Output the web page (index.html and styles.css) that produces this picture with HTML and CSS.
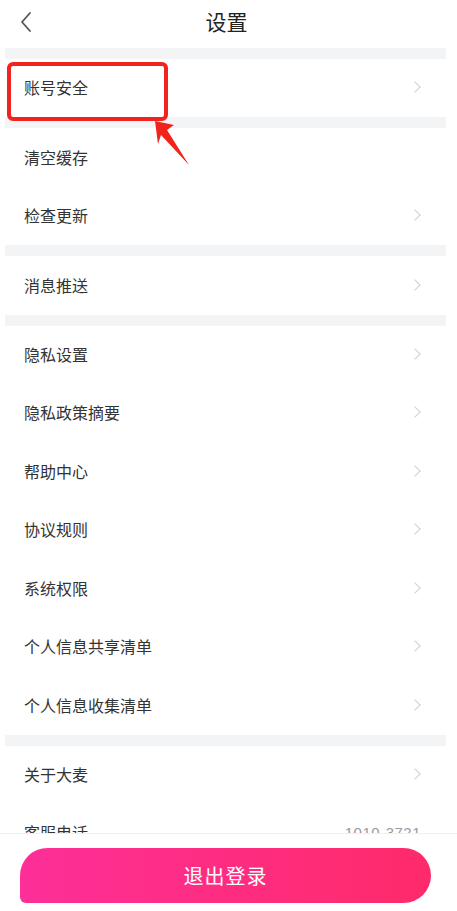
FILE: index.html
```html
<!DOCTYPE html>
<html lang="zh">
<head>
    <meta charset="utf-8">
    <title>设置</title>
    <link rel="stylesheet" href="styles.css">
</head>
<body>
    <div class="page">
        <div class="header">
            <a class="back" href="#">
                <svg width="12" height="20" viewBox="0 0 12 20"><polyline points="9,1 1,10 9,19" fill="none" stroke="#555" stroke-width="1.8" stroke-linecap="round" stroke-linejoin="round"/></svg>
            </a>
            <h1>设置</h1>
            <span></span>
        </div>

        <div class="list">
            <div class="gap"></div>
            <div class="row"><span>账号安全</span><i class="arrow"></i></div>
            <div class="gap"></div>
            <div class="row"><span>清空缓存</span></div>
            <div class="row"><span>检查更新</span><i class="arrow"></i></div>
            <div class="gap"></div>
            <div class="row"><span>消息推送</span><i class="arrow"></i></div>
            <div class="gap"></div>
            <div class="row"><span>隐私设置</span><i class="arrow"></i></div>
            <div class="row"><span>隐私政策摘要</span><i class="arrow"></i></div>
            <div class="row"><span>帮助中心</span><i class="arrow"></i></div>
            <div class="row"><span>协议规则</span><i class="arrow"></i></div>
            <div class="row"><span>系统权限</span><i class="arrow"></i></div>
            <div class="row"><span>个人信息共享清单</span><i class="arrow"></i></div>
            <div class="row"><span>个人信息收集清单</span><i class="arrow"></i></div>
            <div class="gap"></div>
            <div class="row"><span>关于大麦</span><i class="arrow"></i></div>
            <div class="row"><span>客服电话</span><span class="phone">1010-3721</span></div>
        </div>

        <!-- red annotation drawn over the first row -->
        <div class="mark"></div>
        <svg class="pointer" width="457" height="200" viewBox="0 0 457 200">
            <polygon points="155,121 174,125 167,130 189,165 161,135 158,144" fill="#f2231c"/>
        </svg>

        <div class="footer">
            <button class="logout">退出登录</button>
        </div>
    </div>
</body>
</html>
```

FILE: styles.css
```css
* { box-sizing: border-box; }

body {
    margin: 0;
    background: #fff;
    font-family: "Noto Sans CJK SC", "Noto Sans", sans-serif;
    color: #333;
    overflow: hidden;
}

.page {
    position: relative;
    width: 457px;
    height: 911px;
    overflow: hidden;
}

.header {
    display: grid;
    grid-template-columns: 46px 1fr 50px;
    align-items: center;
    height: 48px;
    padding-bottom: 5px;
}
.back {
    display: flex;
    justify-content: flex-end;
    padding-right: 13px;
}
.header h1 {
    margin: 0;
    text-align: center;
    font-size: 21px;
    font-weight: 400;
    color: #222;
    line-height: 1;
}

.list {
    margin-left: 5px;
    width: 441px;
}
.gap {
    height: 11px;
    background: #f3f4f6;
}
.row {
    display: flex;
    align-items: center;
    justify-content: space-between;
    height: 58.45px;
    padding: 0 25px 2px 19px;
    font-size: 16px;
    color: #333;
}
.arrow {
    width: 8px;
    height: 8px;
    border-top: 1.2px solid #cfcfcf;
    border-right: 1.2px solid #cfcfcf;
    transform: rotate(45deg);
    margin-right: 2px;
}
.phone {
    font-family: "Liberation Sans", sans-serif;
    font-size: 15px;
    color: #999;
    letter-spacing: 0.5px;
}

.mark {
    position: absolute;
    left: 7px;
    top: 62px;
    width: 161px;
    height: 59px;
    border: 4px solid #f2231c;
    border-radius: 6px;
}
.pointer {
    position: absolute;
    left: 0;
    top: 0;
}

.footer {
    position: absolute;
    left: 0;
    bottom: 0;
    width: 457px;
    height: 78px;
    background: #fff;
    border-top: 1px solid #f0f0f0;
    padding: 14px 26px 0 20px;
}
.logout {
    display: block;
    width: 100%;
    height: 55px;
    border: 0;
    border-radius: 28px 28px 28px 6px;
    background: linear-gradient(90deg, #fd2f98, #ff2a6a);
    color: #fff;
    font-family: "Noto Sans CJK SC", sans-serif;
    font-size: 20px;
    letter-spacing: 1px;
}
```
